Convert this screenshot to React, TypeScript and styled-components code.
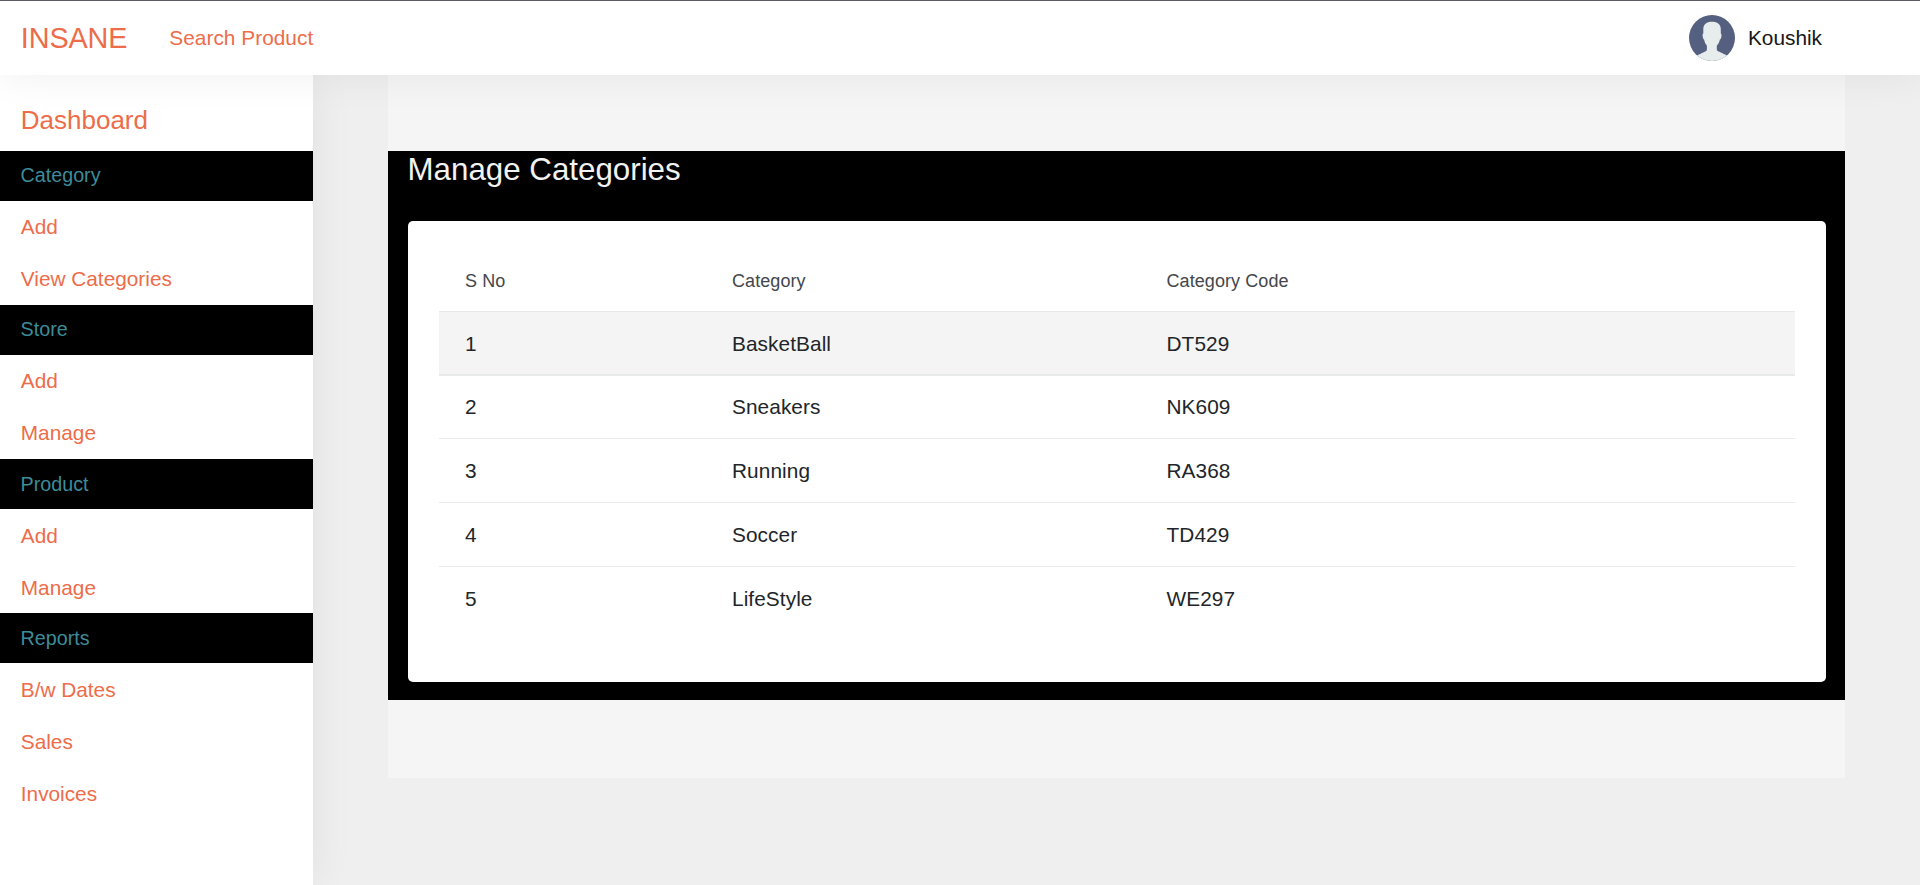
import React from "react";
import styled, { createGlobalStyle } from "styled-components";

const GlobalStyle = createGlobalStyle`
  *, *::before, *::after { box-sizing: border-box; }
  body {
    margin: 0;
    background: #efefef;
    font-family: "Liberation Sans", Arial, sans-serif;
    overflow: hidden;
  }
`;

const ACCENT = "#ed6c49";

const Page = styled.div`
  display: flex;
  flex-direction: column;
  height: 100vh;
`;

const Header = styled.header`
  display: flex;
  align-items: center;
  flex: 0 0 75px;
  padding: 0 98px 0 20.8px;
  background: #fff;
  border-top: 1px solid #5c5b62;
  box-shadow: 0 0 40px rgba(0, 0, 0, 0.065);
  position: relative;
  z-index: 2;
`;

const Brand = styled.a`
  width: 148.5px;
  font-size: 28.8px;
  letter-spacing: -0.1px;
  color: ${ACCENT};
`;

const SearchLink = styled.a`
  font-size: 20.8px;
  letter-spacing: 0.04px;
  color: ${ACCENT};
`;

const Profile = styled.div`
  display: flex;
  align-items: center;
  gap: 13px;
  margin-left: auto;
  font-size: 20.8px;
  color: #161616;
`;

const AvatarImage = styled.svg`
  display: block;
  width: 46px;
  height: 46px;
`;

const Body = styled.div`
  display: flex;
  flex: 1;
  min-height: 0;
`;

const Sidebar = styled.nav`
  flex: 0 0 313px;
  background: #fff;
  box-shadow: 0 0 40px rgba(0, 0, 0, 0.065);
  position: relative;
  z-index: 1;
`;

const SidebarTitle = styled.a`
  display: flex;
  align-items: center;
  height: 75.7px;
  padding: 15px 20.8px 0;
  font-size: 26px;
  color: ${ACCENT};
`;

const GroupTitle = styled.div`
  display: flex;
  align-items: center;
  height: 50.1px;
  padding: 0 20.6px 0.2px;
  background: #000;
  font-size: 19.7px;
  color: #3e8c99;
`;

const NavItem = styled.a`
  display: flex;
  align-items: center;
  height: 52.05px;
  padding: 0.75px 20.8px 0;
  font-size: 20.8px;
  color: ${ACCENT};
`;

const Content = styled.main`
  flex: 1;
  padding: 0 75px;
`;

const ContentInner = styled.div`
  padding: 76px 0 78px;
  background: #f5f5f5;
`;

const Panel = styled.section`
  height: 549px;
  padding: 0 19px 18px 20px;
  background: #000;
  display: flex;
  flex-direction: column;
`;

const PanelTitle = styled.h1`
  margin: 0 0 0 -0.5px;
  height: 70px;
  font-size: 31.3px;
  font-weight: 400;
  line-height: 38px;
  color: #f2f2f2;
`;

const Card = styled.div`
  flex: 1;
  padding: 30px 31px;
  background: #fff;
  border-radius: 5px;
`;

const Table = styled.table`
  width: 100%;
  border-collapse: separate;
  border-spacing: 0;
  table-layout: fixed;
  letter-spacing: 0.08px;
`;

const HeadCell = styled.th<{ $width?: number }>`
  width: ${({ $width }) => ($width ? `${$width}px` : "auto")};
  height: 61px;
  padding: 0 26px;
  border-bottom: 1px solid #e6e7e7;
  text-align: left;
  font-size: 18px;
  font-weight: 400;
  color: #43474b;
`;

const Row = styled.tr<{ $active?: boolean; $height: number }>`
  height: ${({ $height }) => $height}px;
  background: ${({ $active }) => ($active ? "#f4f4f4" : "transparent")};

  td {
    padding-top: ${({ $active }) => ($active ? 2 : 0)}px;
    border-bottom: ${({ $active }) => ($active ? 2 : 1)}px solid #e8e9e9;
  }

  &:last-child td {
    border-bottom-color: transparent;
  }
`;

const Cell = styled.td`
  padding: 0 26px;
  font-size: 20.8px;
  color: #212529;
`;

const menu = [
  { title: "Category", items: ["Add", "View Categories"] },
  { title: "Store", items: ["Add", "Manage"] },
  { title: "Product", items: ["Add", "Manage"] },
  { title: "Reports", items: ["B/w Dates", "Sales", "Invoices"] },
];

const categories = [
  { name: "BasketBall", code: "DT529" },
  { name: "Sneakers", code: "NK609" },
  { name: "Running", code: "RA368" },
  { name: "Soccer", code: "TD429" },
  { name: "LifeStyle", code: "WE297" },
];

const Avatar = () => (
  <AvatarImage viewBox="0 0 46 46" aria-hidden="true">
    <clipPath id="avatar-clip">
      <circle cx="23" cy="23" r="23" />
    </clipPath>
    <g clipPath="url(#avatar-clip)">
      <rect width="46" height="46" fill="#556080" />
      <path
        fill="#e7eced"
        d="M23 6.7C17.5 6.7 14.3 9.2 14.3 14.2V18.5C13.6 18.8 13.5 19.8 13.7 21.5C13.9 23.2 14.4 24.2 15.1 24.5C15.5 27 16.5 29 17.9 30.7V34.2C17.9 35.4 17.2 36 16.2 36.5L8 40.5V46H38V40.5L29.8 36.5C28.6 36 27.8 35.4 27.8 34.2V30.7C29.4 29 30.4 27 30.9 24.5C31.7 24.2 32.2 23.2 32.4 21.5C32.6 19.8 32.5 18.8 31.8 18.5V14.2C31.8 9.2 28.5 6.7 23 6.7Z"
      />
    </g>
  </AvatarImage>
);

export default function App() {
  return (
    <>
      <GlobalStyle />
      <Page>
        <Header>
          <Brand>INSANE</Brand>
          <SearchLink>Search Product</SearchLink>
          <Profile>
            <Avatar />
            <span>Koushik</span>
          </Profile>
        </Header>
        <Body>
          <Sidebar>
            <SidebarTitle>Dashboard</SidebarTitle>
            {menu.map((group) => (
              <React.Fragment key={group.title}>
                <GroupTitle>{group.title}</GroupTitle>
                {group.items.map((item) => (
                  <NavItem key={item}>{item}</NavItem>
                ))}
              </React.Fragment>
            ))}
          </Sidebar>
          <Content>
            <ContentInner>
              <Panel>
                <PanelTitle>Manage Categories</PanelTitle>
                <Card>
                  <Table>
                    <thead>
                      <tr>
                        <HeadCell $width={267}>S No</HeadCell>
                        <HeadCell $width={434.5}>Category</HeadCell>
                        <HeadCell>Category Code</HeadCell>
                      </tr>
                    </thead>
                    <tbody>
                      {categories.map((category, index) => (
                        <Row
                          key={category.code}
                          $active={index === 0}
                          $height={index === 1 ? 63 : 64}
                        >
                          <Cell>{index + 1}</Cell>
                          <Cell>{category.name}</Cell>
                          <Cell>{category.code}</Cell>
                        </Row>
                      ))}
                    </tbody>
                  </Table>
                </Card>
              </Panel>
            </ContentInner>
          </Content>
        </Body>
      </Page>
    </>
  );
}
